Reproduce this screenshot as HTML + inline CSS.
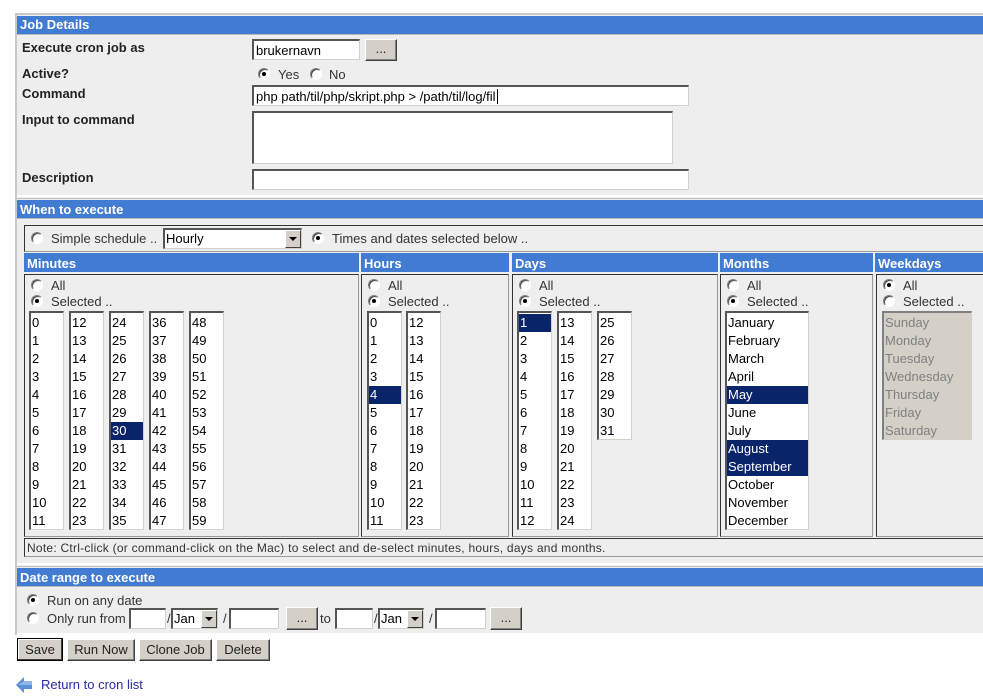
<!DOCTYPE html>
<html><head><meta charset="utf-8"><style>
*{box-sizing:border-box;margin:0;padding:0}
body{width:983px;height:697px;background:#fff;font-family:"Liberation Sans",sans-serif;font-size:13px;color:#000;position:relative;overflow:hidden}
.a{position:absolute}
.hdr{position:absolute;background:#427bd2;color:#fff;font-weight:bold;font-size:13px;line-height:19px;padding-left:3px;white-space:nowrap}
.bg{position:absolute;background:#eeeeee}
.lbl{position:absolute;font-weight:bold;font-size:13px;color:#222}
.inp{position:absolute;background:#fff;border-top:2px solid #555;border-left:2px solid #555;border-bottom:1px solid #d4d0c8;border-right:1px solid #d4d0c8;font-size:13px;line-height:16px;padding-left:2px;white-space:nowrap;overflow:hidden}
.btn{position:absolute;background:#d4d0c8;border:1px solid;border-color:#fff #404040 #404040 #fff;box-shadow:inset -1px -1px 0 #808080;text-align:center;font-size:13px;color:#222}
.r{position:absolute;width:12px;height:12px;border-radius:50%;background:#fff;border:1px solid;border-color:#808080 #fff #fff #808080;box-shadow:inset 1px 1px 0 #404040}
.r.on::after{content:"";position:absolute;left:3px;top:3px;width:4px;height:4px;border-radius:50%;background:#000}
.t{position:absolute;font-size:13px;color:#333;white-space:nowrap}
.box{position:absolute;border:1px solid #333;border-right-color:#999;border-bottom-color:#999}
.lb{position:absolute;background:#fff;border-top:2px solid #555;border-left:2px solid #555;border-bottom:1px solid #d4d0c8;border-right:1px solid #d4d0c8;padding-top:1px;overflow:hidden}
.lb div{height:18px;line-height:18px;font-size:13px;padding-left:1px;white-space:nowrap}
.lb .s{background:#0a246a;color:#fff}
.lb.dis{background:#d4d0c8;border-top-color:#808080;border-left-color:#808080}
.lb.dis div{color:#808080}
.sel{position:absolute;background:#fff;border-top:2px solid #555;border-left:2px solid #555;border-bottom:1px solid #d4d0c8;border-right:1px solid #d4d0c8;font-size:13px;line-height:17px;padding-left:1px}
.dd{position:absolute;right:0;top:0;width:16px;bottom:0;background:#d4d0c8;border:1px solid;border-color:#fff #404040 #404040 #fff}
.dd::after{content:"";position:absolute;left:3px;top:6px;border-left:4px solid transparent;border-right:4px solid transparent;border-top:4px solid #000}
</style></head><body>
<div class="a" style="left:15px;top:13px;width:970px;height:622px;background:#c8c8c8"></div>
<div class="bg" style="left:17px;top:15px;width:970px;height:618px"></div>

<div class="hdr" style="left:17px;top:16px;width:970px;height:18px;line-height:18px">Job Details</div>
<div class="a" style="left:17px;top:34px;width:970px;height:1px;background:#b8b8b8"></div>
<div class="lbl" style="left:22px;top:40px">Execute cron job as</div>
<div class="inp" style="left:252px;top:39px;width:108px;height:21px;padding-top:2px">brukernavn</div>
<div class="btn" style="left:365px;top:39px;width:32px;height:22px;line-height:18px">...</div>
<div class="lbl" style="left:22px;top:66px">Active?</div>
<div class="r on" style="left:258px;top:68px"></div><div class="t" style="left:278px;top:67px">Yes</div>
<div class="r" style="left:310px;top:68px"></div><div class="t" style="left:329px;top:67px">No</div>
<div class="lbl" style="left:22px;top:86px">Command</div>
<div class="inp" style="left:252px;top:85px;width:437px;height:21px;padding-top:2px;color:#000">php path/til/php/skript.php &gt; /path/til/log/fil<span style="border-left:1px solid #000;margin-left:1px"></span></div>
<div class="lbl" style="left:22px;top:112px">Input to command</div>
<div class="inp" style="left:252px;top:111px;width:421px;height:53px"></div>
<div class="lbl" style="left:22px;top:170px">Description</div>
<div class="inp" style="left:252px;top:169px;width:437px;height:21px"></div>
<div class="a" style="left:17px;top:195px;width:970px;height:2px;background:#fff"></div>

<div class="a" style="left:17px;top:198px;width:970px;height:1px;background:#c0c0c0"></div>
<div class="hdr" style="left:17px;top:200px;width:970px;height:18px;line-height:19px">When to execute</div>
<div class="a" style="left:17px;top:218px;width:970px;height:1px;background:#b8b8b8"></div>

<div class="box" style="left:24px;top:225px;width:965px;height:27px"></div>
<div class="r" style="left:31px;top:232px"></div><div class="t" style="left:51px;top:231px">Simple schedule ..</div>
<div class="sel" style="left:163px;top:228px;width:139px;height:21px">Hourly<div class="dd"></div></div>
<div class="r on" style="left:312px;top:232px"></div><div class="t" style="left:332px;top:231px">Times and dates selected below ..</div>

<div class="hdr" style="left:24px;top:253px;width:335px;height:19px;line-height:21px">Minutes</div>
<div class="hdr" style="left:361px;top:253px;width:148px;height:19px;line-height:21px">Hours</div>
<div class="hdr" style="left:512px;top:253px;width:206px;height:19px;line-height:21px">Days</div>
<div class="hdr" style="left:720px;top:253px;width:153px;height:19px;line-height:21px">Months</div>
<div class="hdr" style="left:875px;top:253px;width:110px;height:19px;line-height:21px">Weekdays</div>

<div class="box" style="left:24px;top:274px;width:335px;height:263px"></div>
<div class="box" style="left:361px;top:274px;width:148px;height:263px"></div>
<div class="box" style="left:512px;top:274px;width:206px;height:263px"></div>
<div class="box" style="left:720px;top:274px;width:153px;height:263px"></div>
<div class="box" style="left:876px;top:274px;width:110px;height:263px"></div>

<div class="r" style="left:31px;top:279px"></div><div class="t" style="left:51px;top:278px">All</div>
<div class="r on" style="left:31px;top:295px"></div><div class="t" style="left:51px;top:294px">Selected ..</div>
<div class="r" style="left:368px;top:279px"></div><div class="t" style="left:388px;top:278px">All</div>
<div class="r on" style="left:368px;top:295px"></div><div class="t" style="left:388px;top:294px">Selected ..</div>
<div class="r" style="left:519px;top:279px"></div><div class="t" style="left:539px;top:278px">All</div>
<div class="r on" style="left:519px;top:295px"></div><div class="t" style="left:539px;top:294px">Selected ..</div>
<div class="r" style="left:727px;top:279px"></div><div class="t" style="left:747px;top:278px">All</div>
<div class="r on" style="left:727px;top:295px"></div><div class="t" style="left:747px;top:294px">Selected ..</div>
<div class="r on" style="left:883px;top:279px"></div><div class="t" style="left:903px;top:278px">All</div>
<div class="r" style="left:883px;top:295px"></div><div class="t" style="left:903px;top:294px">Selected ..</div>

<div class="lb" style="left:29px;top:311px;width:35px;height:219px"><div>0</div><div>1</div><div>2</div><div>3</div><div>4</div><div>5</div><div>6</div><div>7</div><div>8</div><div>9</div><div>10</div><div>11</div></div>
<div class="lb" style="left:69px;top:311px;width:35px;height:219px"><div>12</div><div>13</div><div>14</div><div>15</div><div>16</div><div>17</div><div>18</div><div>19</div><div>20</div><div>21</div><div>22</div><div>23</div></div>
<div class="lb" style="left:109px;top:311px;width:35px;height:219px"><div>24</div><div>25</div><div>26</div><div>27</div><div>28</div><div>29</div><div class="s">30</div><div>31</div><div>32</div><div>33</div><div>34</div><div>35</div></div>
<div class="lb" style="left:149px;top:311px;width:35px;height:219px"><div>36</div><div>37</div><div>38</div><div>39</div><div>40</div><div>41</div><div>42</div><div>43</div><div>44</div><div>45</div><div>46</div><div>47</div></div>
<div class="lb" style="left:189px;top:311px;width:35px;height:219px"><div>48</div><div>49</div><div>50</div><div>51</div><div>52</div><div>53</div><div>54</div><div>55</div><div>56</div><div>57</div><div>58</div><div>59</div></div>
<div class="lb" style="left:367px;top:311px;width:35px;height:219px"><div>0</div><div>1</div><div>2</div><div>3</div><div class="s">4</div><div>5</div><div>6</div><div>7</div><div>8</div><div>9</div><div>10</div><div>11</div></div>
<div class="lb" style="left:406px;top:311px;width:35px;height:219px"><div>12</div><div>13</div><div>14</div><div>15</div><div>16</div><div>17</div><div>18</div><div>19</div><div>20</div><div>21</div><div>22</div><div>23</div></div>
<div class="lb" style="left:517px;top:311px;width:35px;height:219px"><div class="s">1</div><div>2</div><div>3</div><div>4</div><div>5</div><div>6</div><div>7</div><div>8</div><div>9</div><div>10</div><div>11</div><div>12</div></div>
<div class="lb" style="left:557px;top:311px;width:35px;height:219px"><div>13</div><div>14</div><div>15</div><div>16</div><div>17</div><div>18</div><div>19</div><div>20</div><div>21</div><div>22</div><div>23</div><div>24</div></div>
<div class="lb" style="left:597px;top:311px;width:35px;height:129px"><div>25</div><div>26</div><div>27</div><div>28</div><div>29</div><div>30</div><div>31</div></div>
<div class="lb" style="left:725px;top:311px;width:84px;height:219px"><div>January</div><div>February</div><div>March</div><div>April</div><div class="s">May</div><div>June</div><div>July</div><div class="s">August</div><div class="s">September</div><div>October</div><div>November</div><div>December</div></div>
<div class="lb dis" style="left:882px;top:311px;width:90px;height:129px"><div>Sunday</div><div>Monday</div><div>Tuesday</div><div>Wednesday</div><div>Thursday</div><div>Friday</div><div>Saturday</div></div>

<div class="box" style="left:24px;top:538px;width:965px;height:19px"></div>
<div class="t" style="left:27px;top:541px;font-size:12px;letter-spacing:0.25px">Note: Ctrl-click (or command-click on the Mac) to select and de-select minutes, hours, days and months.</div>

<div class="a" style="left:17px;top:563px;width:970px;height:2px;background:#fff"></div>
<div class="a" style="left:17px;top:566px;width:970px;height:1px;background:#c0c0c0"></div>
<div class="hdr" style="left:17px;top:568px;width:970px;height:18px;line-height:19px">Date range to execute</div>
<div class="a" style="left:17px;top:586px;width:970px;height:1px;background:#b8b8b8"></div>
<div class="r on" style="left:27px;top:594px"></div><div class="t" style="left:47px;top:593px">Run on any date</div>
<div class="r" style="left:27px;top:612px"></div><div class="t" style="left:47px;top:611px">Only run from</div>
<div class="inp" style="left:129px;top:608px;width:37px;height:21px"></div>
<div class="t" style="left:167px;top:611px">/</div>
<div class="sel" style="left:171px;top:608px;width:47px;height:21px">Jan<div class="dd"></div></div>
<div class="t" style="left:223px;top:611px">/</div>
<div class="inp" style="left:229px;top:608px;width:50px;height:21px"></div>
<div class="btn" style="left:286px;top:607px;width:32px;height:23px;line-height:19px">...</div>
<div class="t" style="left:320px;top:611px">to</div>
<div class="inp" style="left:335px;top:608px;width:38px;height:21px"></div>
<div class="t" style="left:374px;top:611px">/</div>
<div class="sel" style="left:378px;top:608px;width:46px;height:21px">Jan<div class="dd"></div></div>
<div class="t" style="left:429px;top:611px">/</div>
<div class="inp" style="left:435px;top:608px;width:51px;height:21px"></div>
<div class="btn" style="left:490px;top:607px;width:32px;height:23px;line-height:19px">...</div>
<div class="a" style="left:17px;top:633px;width:970px;height:2px;background:#fff"></div>

<div class="btn" style="left:17px;top:638px;width:46px;height:23px;line-height:21px;border:1px solid #000;box-shadow:inset -1px -1px 0 #404040,inset 1px 1px 0 #fff">Save</div>
<div class="btn" style="left:67px;top:639px;width:68px;height:22px;line-height:20px">Run Now</div>
<div class="btn" style="left:139px;top:639px;width:73px;height:22px;line-height:20px">Clone Job</div>
<div class="btn" style="left:216px;top:639px;width:54px;height:22px;line-height:20px">Delete</div>

<svg class="a" style="left:15px;top:675px" width="18" height="20" viewBox="0 0 18 20"><path d="M1 10 L9 2 L9 6 L17 6 L17 14 L9 14 L9 18 Z" fill="#5b8fd8"/><path d="M9 6 L17 6 L17 10 L3 10 Z" fill="#8fb4ea"/></svg>
<div class="t" style="left:41px;top:677px;color:#2a2aa0;font-size:13px">Return to cron list</div>
</body></html>
